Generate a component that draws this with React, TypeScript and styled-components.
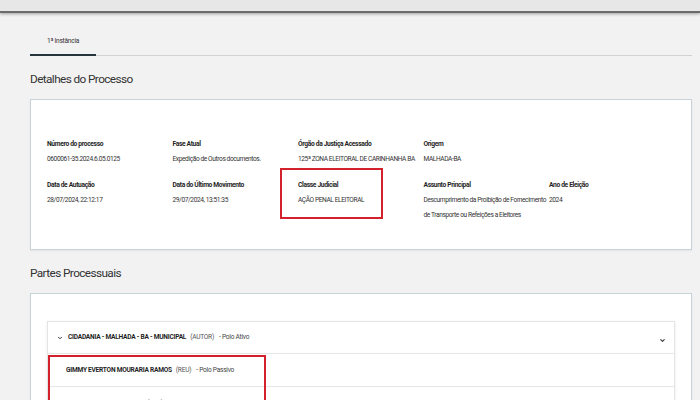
import styled, { createGlobalStyle } from "styled-components";
import { ChevronDown } from "lucide-react";

const GlobalStyle = createGlobalStyle`
  html, body {
    margin: 0;
    padding: 0;
    background: #f2f2f2;
  }
  body {
    width: 700px;
    height: 400px;
    overflow: hidden;
    font-family: Roboto, "Liberation Sans", Arial, sans-serif;
    color: #333;
  }
`;

const TopBar = styled.div`
  height: 11px;
  background: #e7e7e7;
  border-bottom: 2px solid #6b6b6b;
  box-shadow: 0 1px 3px rgba(0, 0, 0, 0.35);
`;

const Main = styled.main`
  padding: 0 8px 0 30px;
`;

const TabBar = styled.div`
  display: flex;
  margin-top: 22px;
  border-bottom: 1px solid #d2d2d2;
`;

const Tab = styled.div<{ $active?: boolean }>`
  width: 66px;
  text-align: center;
  font-size: 6.6px;
  line-height: 12px;
  letter-spacing: -0.25px;
  padding-bottom: 7px;
  margin-bottom: -1px;
  color: #333;
  border-bottom: 2px solid ${(p) => (p.$active ? "#26343c" : "transparent")};
`;

const SectionTitle = styled.h2`
  margin: 14px 0 11px;
  font-size: 11.8px;
  line-height: 18px;
  letter-spacing: -0.6px;
  font-weight: 400;
  color: #333;
`;

const Card = styled.section<{ $pad: string }>`
  background: #fff;
  border: 1px solid #c7d2d9;
  box-shadow: 0 1px 2px rgba(0, 0, 0, 0.06);
  padding: ${(p) => p.$pad};
`;

const DetailsGrid = styled.div`
  display: grid;
  grid-template-columns: repeat(5, 125.5px);
  row-gap: 11px;
`;

const Field = styled.div<{ $marked?: boolean }>`
  position: relative;
  ${(p) =>
    p.$marked &&
    `
    &::after {
      content: "";
      box-sizing: border-box;
      position: absolute;
      left: -18px;
      top: -10px;
      width: 103px;
      height: 51px;
      border: 2px solid #d3222c;
    }
  `}
`;

const Label = styled.div`
  font-size: 6.7px;
  line-height: 15px;
  letter-spacing: -0.35px;
  font-weight: 700;
  color: #1f1f1f;
  white-space: nowrap;
`;

const Value = styled.div`
  font-size: 6.6px;
  line-height: 15px;
  letter-spacing: -0.4px;
  color: #333;
  white-space: nowrap;
`;

const Accordion = styled.div`
  border: 1px solid #e4e4e4;
  box-shadow: 0 1px 3px rgba(0, 0, 0, 0.08);
`;

const AccordionHeader = styled.div`
  display: flex;
  align-items: center;
  height: 31px;
  padding: 0 8px 0 9px;
  font-size: 6.6px;
  letter-spacing: -0.25px;
  color: #333;
`;

const HeaderText = styled.div`
  flex: 1;
  display: flex;
  align-items: center;
  gap: 4px;
  margin-left: 5px;
  margin-top: -2px;
`;

const RightChevron = styled.div`
  display: flex;
  color: #444;
  margin-top: 5px;
`;

const PartyList = styled.div`
  position: relative;
`;

const Marker = styled.div`
  box-sizing: border-box;
  position: absolute;
  left: 0;
  top: 2px;
  width: 218px;
  height: 100px;
  border: 2px solid #d3222c;
  pointer-events: none;
`;

const PartyRow = styled.div`
  display: flex;
  align-items: center;
  gap: 4px;
  height: 32px;
  padding-left: 18px;
  border-top: 1px solid #e6e6e6;
  font-size: 6.6px;
  letter-spacing: -0.25px;
  color: #333;
`;

const Name = styled.span`
  font-weight: 700;
  color: #1f1f1f;
`;

const Role = styled.span`
  color: #555;
`;

const Polo = styled.span`
  margin-left: 1px;
  color: #444;
`;

type Detail = { label: string; lines: string[]; marked?: boolean };

const details: Detail[] = [
  { label: "Número do processo", lines: ["0600061-35.2024.6.05.0125"] },
  { label: "Fase Atual", lines: ["Expedição de Outros documentos."] },
  { label: "Órgão da Justiça Acessado", lines: ["125ª ZONA ELEITORAL DE CARINHANHA BA"] },
  { label: "Origem", lines: ["MALHADA-BA"] },
  { label: "", lines: [] },
  { label: "Data de Autuação", lines: ["28/07/2024, 22:12:17"] },
  { label: "Data do Último Movimento", lines: ["29/07/2024, 13:51:35"] },
  { label: "Classe Judicial", lines: ["AÇÃO PENAL ELEITORAL"], marked: true },
  {
    label: "Assunto Principal",
    lines: ["Descumprimento da Proibição de Fornecimento", "de Transporte ou Refeições a Eleitores"],
  },
  { label: "Ano de Eleição", lines: ["2024"] },
];

const parties = [
  { name: "GIMMY EVERTON MOURARIA RAMOS", role: "(REU)", polo: "- Polo Passivo" },
  { name: "MANOEL BUENO DE SOUZA", role: "(REU)", polo: "- Polo Passivo" },
];

export default function App() {
  return (
    <>
      <GlobalStyle />
      <TopBar />
      <Main>
        <TabBar>
          <Tab $active>1ª Instância</Tab>
        </TabBar>

        <SectionTitle>Detalhes do Processo</SectionTitle>
        <Card $pad="37px 16px 26px 16px">
          <DetailsGrid>
            {details.map((d, i) => (
              <Field key={i} $marked={d.marked}>
                {d.label && <Label>{d.label}</Label>}
                {d.lines.map((line) => (
                  <Value key={line}>{line}</Value>
                ))}
              </Field>
            ))}
          </DetailsGrid>
        </Card>

        <SectionTitle>Partes Processuais</SectionTitle>
        <Card $pad="27px 16px 40px 16px">
          <Accordion>
            <AccordionHeader>
              <ChevronDown size={6} strokeWidth={4} color="#333" />
              <HeaderText>
                <Name>CIDADANIA - MALHADA - BA - MUNICIPAL</Name>
                <Role>(AUTOR)</Role>
                <Polo>- Polo Ativo</Polo>
              </HeaderText>
              <RightChevron>
                <ChevronDown size={7} strokeWidth={4} />
              </RightChevron>
            </AccordionHeader>
            <PartyList>
              <Marker />
              {parties.map((p) => (
                <PartyRow key={p.name}>
                  <Name>{p.name}</Name>
                  <Role>{p.role}</Role>
                  <Polo>{p.polo}</Polo>
                </PartyRow>
              ))}
            </PartyList>
          </Accordion>
        </Card>
      </Main>
    </>
  );
}
